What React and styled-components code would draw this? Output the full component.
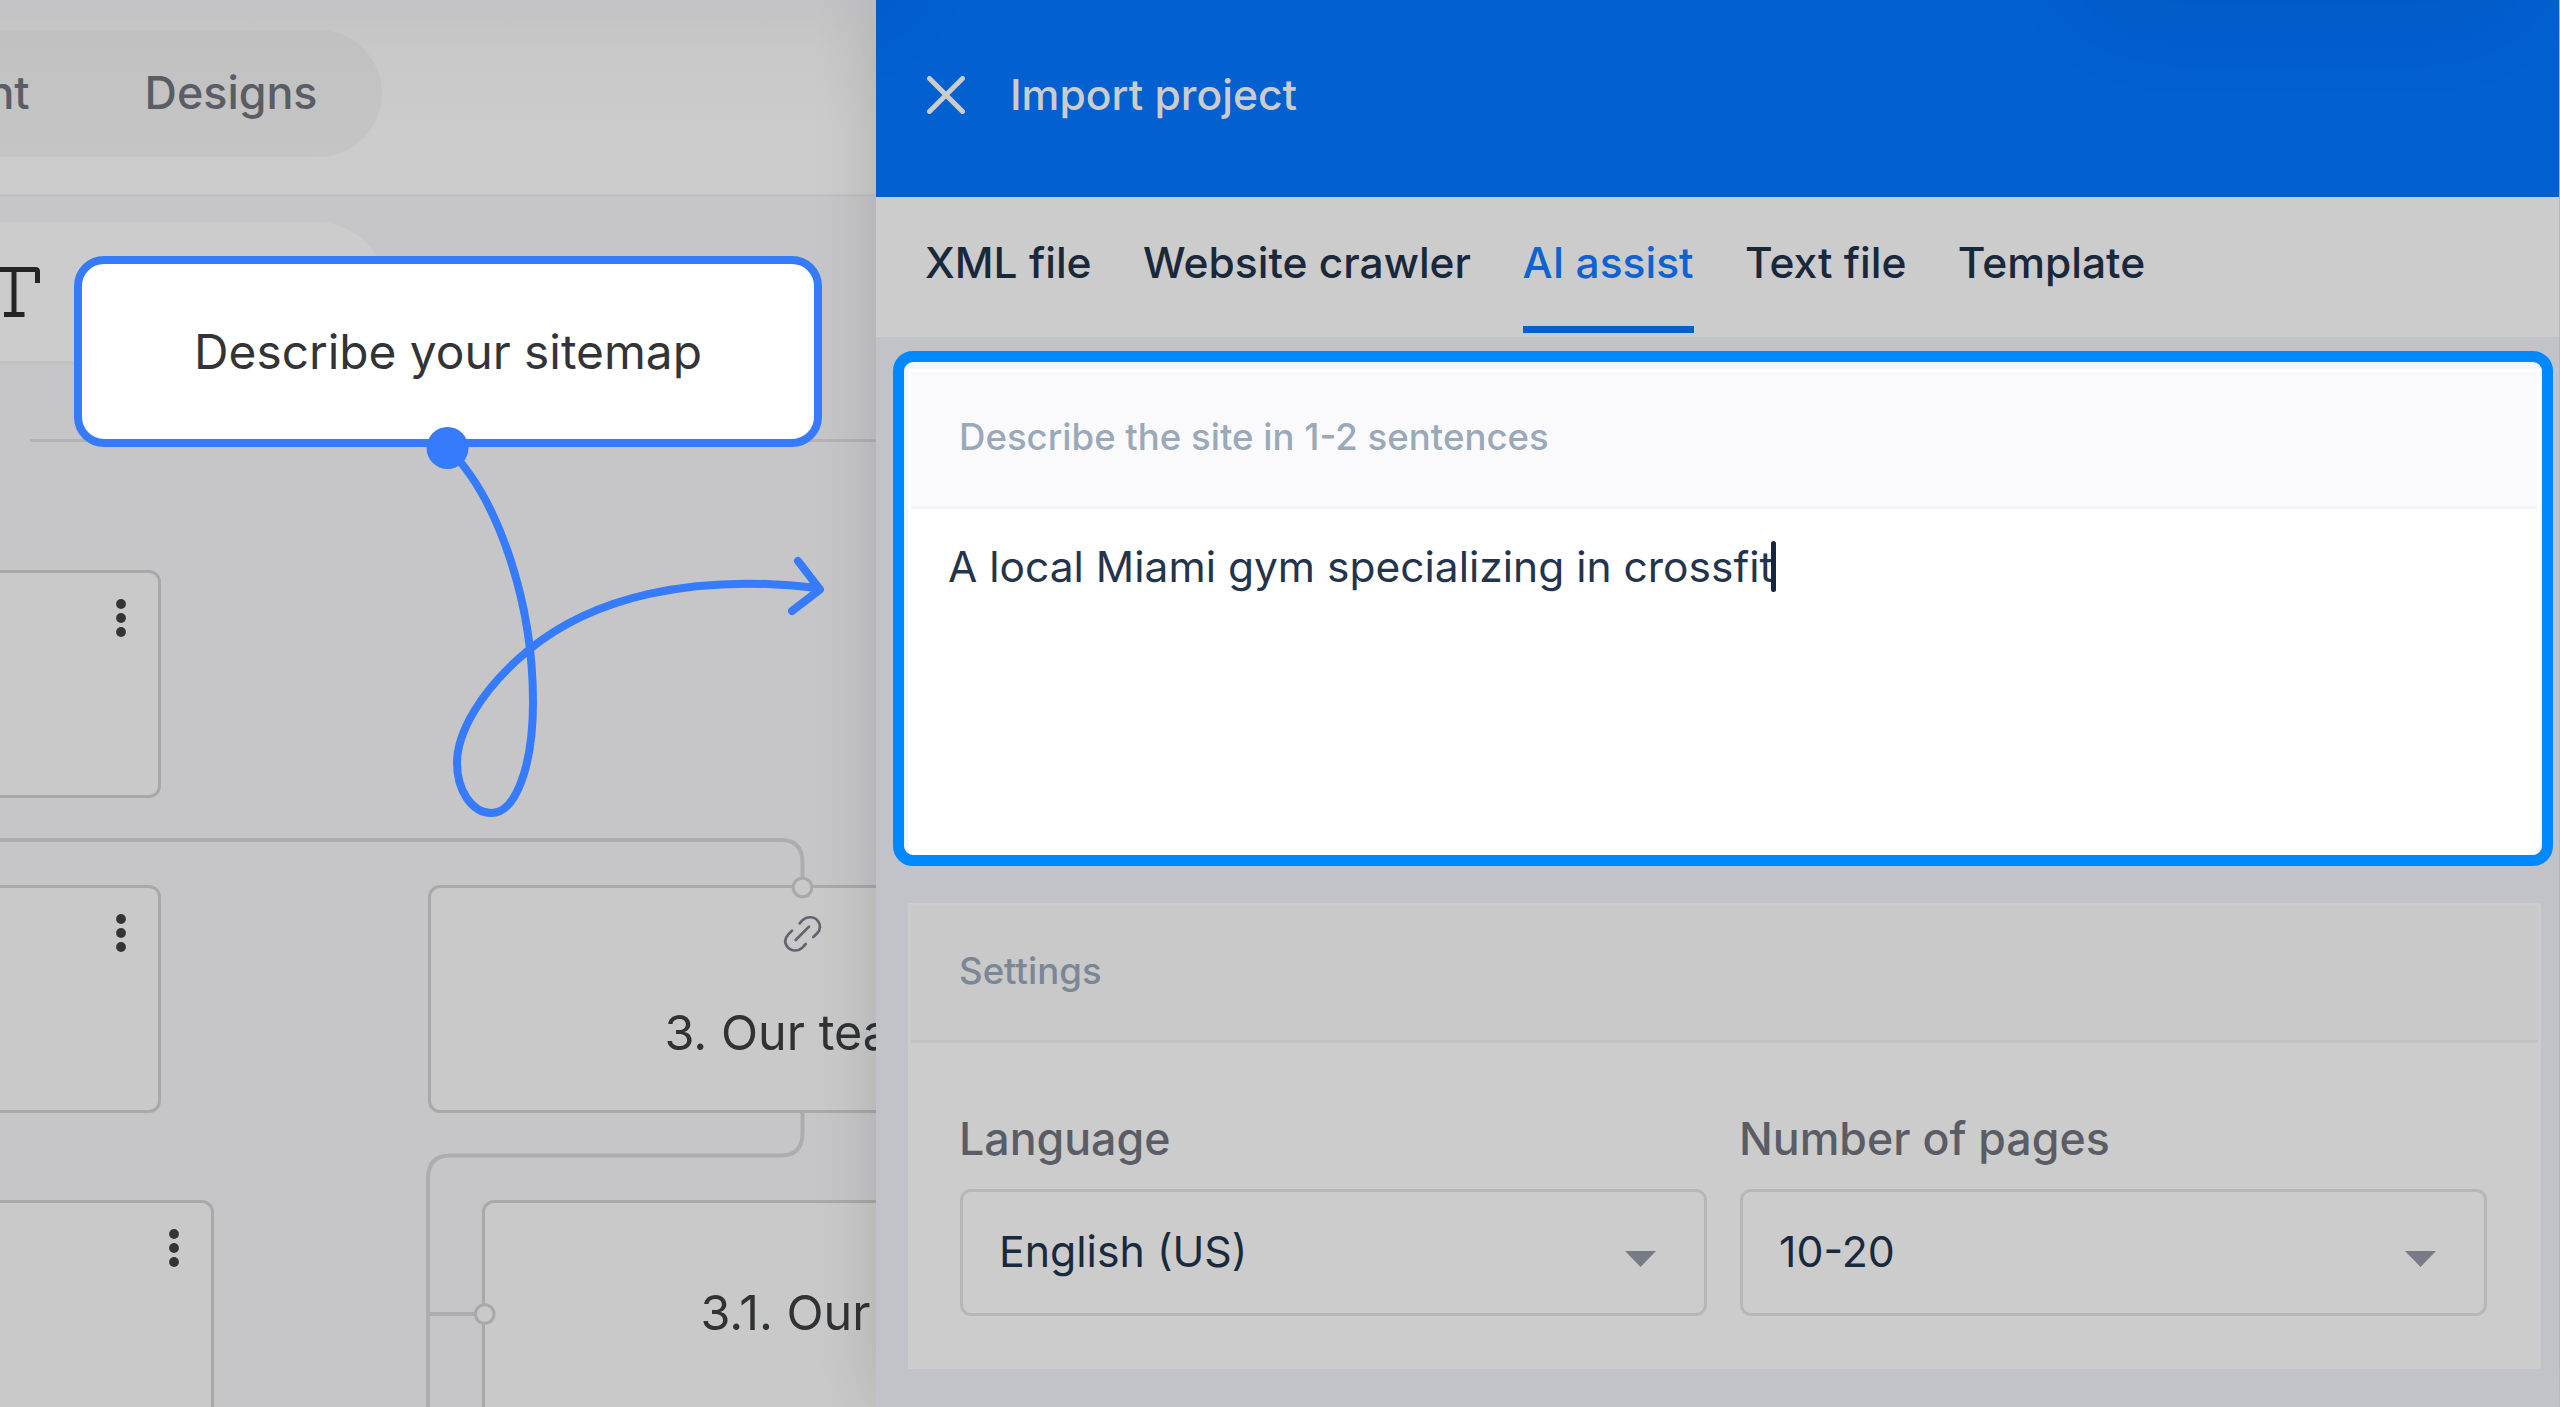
import React, { useState } from 'react'
import styled, { createGlobalStyle } from 'styled-components'

const tabs = ['XML file', 'Website crawler', 'AI assist', 'Text file', 'Template']

const settings = [
    { label: 'Language', value: 'English (US)' },
    { label: 'Number of pages', value: '10-20' },
]

function Dots() {
    return (
        <DotsIcon viewBox="0 0 10 38">
            <circle cx="5" cy="5" r="4.9" />
            <circle cx="5" cy="19" r="4.9" />
            <circle cx="5" cy="33" r="4.9" />
        </DotsIcon>
    )
}

function Sitemap() {
    return (
        <Workspace>
            <TopBar>
                <Switcher>
                    <span>Content</span>
                    <span>Designs</span>
                </Switcher>
            </TopBar>
            <Board>
                <Toolbar>
                    <TextIcon viewBox="-13 0 54 54">
                        <path d="M-10 16V6.5Q-10 4.5 -8 4.5H35.5Q37.5 4.5 37.5 6.5V18M14 4.5V50M4 49.5H24.5" />
                    </TextIcon>
                </Toolbar>
                <Connectors viewBox="0 197 876 1210">
                    <path className="ruler" d="M30 440.5H876" />
                    <path d="M0 840H781Q802.5 840 802.5 863V886" />
                    <path d="M802.5 1112V1133Q802.5 1155.5 781 1155.5H450Q428 1155.5 428 1179V1407M428 1314H480" />
                </Connectors>
                <Node $x={-300} $y={373} $w={460.5} $h={228}><Dots /></Node>
                <Node $x={-300} $y={688} $w={460.5} $h={228}><Dots /></Node>
                <Node $x={-300} $y={1003} $w={514} $h={300}><Dots /></Node>
                <Node $x={427.5} $y={688} $w={750} $h={228}>
                    <LinkIcon viewBox="40 160 116 116">
                        <path d="M90 188L97 180C111 165 136 167 146 183C153 195 152 207 143 217L131 229" />
                        <path d="M67 210L56 221C45 233 44 246 52 257C62 272 84 274 99 260L108 250" />
                        <path d="M118 198L78 238" />
                    </LinkIcon>
                    <NodeTitle $top={49} $left={234}>3. Our team</NodeTitle>
                </Node>
                <Node $x={481.5} $y={1003} $w={750} $h={300}>
                    <NodeTitle $top={79} $left={216}>3.1. Our</NodeTitle>
                </Node>
                <Connectors viewBox="0 197 876 1210">
                    <circle cx="802.5" cy="887.5" r="9.3" />
                    <circle cx="484.7" cy="1314" r="9.3" />
                </Connectors>
            </Board>
        </Workspace>
    )
}

function ImportPanel() {
    const [active, setActive] = useState('AI assist')

    return (
        <Panel>
            <PanelHeader>
                <CloseIcon viewBox="0 0 38 38">
                    <path d="M2.5 2.5L35.5 35.5M35.5 2.5L2.5 35.5" />
                </CloseIcon>
                <h1>Import project</h1>
            </PanelHeader>
            <Tabs>
                {tabs.map(tab => (
                    <Tab key={tab} $active={tab === active} onClick={() => setActive(tab)}>{tab}</Tab>
                ))}
            </Tabs>
            <PanelBody>
                <Highlight>
                    <Prompt>
                        <SectionTitle>Describe the site in 1-2 sentences</SectionTitle>
                        <PromptText>A local Miami gym specializing in crossfit<Caret /></PromptText>
                    </Prompt>
                </Highlight>
                <SettingsCard>
                    <SectionTitle $dim>Settings</SectionTitle>
                    <Fields>
                        {settings.map(({ label, value }) => (
                            <Field key={label}>
                                <Label>{label}</Label>
                                <Select>
                                    {value}
                                    <Arrow viewBox="0 0 31 16"><path d="M0 0H31L15.5 16Z" /></Arrow>
                                </Select>
                            </Field>
                        ))}
                    </Fields>
                </SettingsCard>
            </PanelBody>
        </Panel>
    )
}

function App() {
    return (
        <Page>
            <GlobalStyle />
            <Sitemap />
            <ImportPanel />
            <Callout>Describe your sitemap</Callout>
            <Pointer viewBox="0 0 876 860">
                <circle cx="447.5" cy="448" r="21" />
                <path d="M447.5 448C498 497 533 602 533 702C533 768 515 813 491.5 813C471 813 457 789 457 763C457 735 478 692 528.6 650C592 598 690 573 818 588" />
                <path d="M798 561L820 589.5L792 611" />
            </Pointer>
        </Page>
    )
}

const GlobalStyle = createGlobalStyle`
    * {
        box-sizing: border-box;
    }

    body {
        margin: 0;
        background: #c2c3c9;
        font-family: Inter, sans-serif;
    }
`;

const Page = styled.div`
    position: relative;
    display: flex;
    width: 2560px;
    height: 1407px;
    overflow: hidden;
`;

const Workspace = styled.main`
    display: flex;
    flex-direction: column;
    width: 876px;
    background: #c6c6c8;
    overflow: hidden;
`;

const TopBar = styled.header`
    display: flex;
    align-items: flex-start;
    height: 197px;
    padding-top: 30px;
    border-bottom: 3px solid #c2c2c3;
    background: linear-gradient(#c2c2c4, #c8c8c8 50px, #cccccc 130px);
`;

const Switcher = styled.div`
    display: flex;
    justify-content: flex-end;
    gap: 115px;
    width: 381.5px;
    height: 127px;
    padding-right: 64px;
    border-radius: 0 64px 64px 0;
    background: linear-gradient(#c1c1c2, #c5c5c5);
    color: #5b5d66;
    font-size: 44.8px;
    font-weight: 500;
    line-height: 127px;
`;

const Board = styled.div`
    position: relative;
    flex: 1;
`;

const Toolbar = styled.div`
    width: 387px;
    height: 142px;
    margin-top: 25px;
    padding-top: 43px;
    border-bottom: 3px solid #c2c2c3;
    border-radius: 0 71px 71px 0;
    background: #cccccc;
`;

const TextIcon = styled.svg`
    display: block;
    width: 54px;
    height: 54px;
    margin-left: -13px;
    fill: none;
    stroke: #222426;
    stroke-width: 5;
`;

/* Lines between the nodes of the sitemap */
const Connectors = styled.svg`
    position: absolute;
    top: 0;
    left: 0;
    width: 876px;
    height: 1210px;
    fill: none;
    stroke: #adadae;
    stroke-width: 4;

    .ruler {
        stroke: #b3b3b4;
        stroke-width: 3;
    }

    circle {
        fill: #c9c9c9;
        stroke: #a9a9aa;
        stroke-width: 3;
    }
`;

const Node = styled.article`
    position: absolute;
    left: ${({ $x }) => $x}px;
    top: ${({ $y }) => $y}px;
    width: ${({ $w }) => $w}px;
    height: ${({ $h }) => $h}px;
    border: 3px solid #a9a9aa;
    border-radius: 12px;
    background: #c9c9c9;
`;

const DotsIcon = styled.svg`
    display: block;
    width: 10px;
    height: 38px;
    margin: 26px 32px 0 auto;
    fill: #333436;
`;

const LinkIcon = styled.svg`
    display: block;
    width: 38.7px;
    height: 38.7px;
    margin: 26px auto 0;
    fill: none;
    stroke: #5f646f;
    stroke-width: 8;
    stroke-linecap: round;
`;

const NodeTitle = styled.h3`
    margin: ${({ $top }) => $top}px 0 0 ${({ $left }) => $left}px;
    color: #303234;
    font-size: 48.5px;
    font-weight: 400;
    line-height: 62px;
    white-space: nowrap;
`;

const Panel = styled.aside`
    position: relative;
    flex: 1;
    margin-right: 1px;
    background: #c2c3c9;
    box-shadow: 0 0 60px rgba(0, 0, 0, 0.14);
`;

const PanelHeader = styled.div`
    position: relative;
    display: flex;
    align-items: center;
    gap: 45px;
    height: 197px;
    padding: 0 0 8px 51px;
    background: #0360d0;
    overflow: hidden;

    h1 {
        margin: 0;
        color: #cccccc;
        font-size: 42.6px;
        font-weight: 500;
    }

    /* soft shades falling in from above the window */
    &::before,
    &::after {
        content: '';
        position: absolute;
        top: -100px;
        height: 100px;
        border-radius: 60px;
        box-shadow: 0 0 90px 25px rgba(0, 30, 60, 0.07);
    }

    &::before {
        left: -300px;
        width: 310px;
    }

    &::after {
        left: 1220px;
        width: 410px;
    }
`;

const CloseIcon = styled.svg`
    width: 38px;
    height: 38px;
    fill: none;
    stroke: #cccccc;
    stroke-width: 5;
    stroke-linecap: round;
`;

const Tabs = styled.nav`
    display: flex;
    gap: 51.5px;
    height: 140px;
    padding: 0 49px;
    background: #cccccc;
`;

const Tab = styled.button`
    height: 136px;
    padding: 2px 0 0;
    border: none;
    border-bottom: 7px solid ${({ $active }) => ($active ? '#0360d0' : 'transparent')};
    background: none;
    color: ${({ $active }) => ($active ? '#0f62d2' : '#1a283b')};
    font-family: inherit;
    font-size: 42.5px;
    font-weight: 500;
`;

const PanelBody = styled.div`
    padding: 13.5px 18px 0 32px;
`;

const Highlight = styled.section`
    height: 515px;
    margin: 0 -12px 0 -15px;
    padding: 7px 2px 0 4px;
    border: 11px solid #0088ff;
    border-radius: 20px;
    background: #f4f4ff;
`;

const Prompt = styled.div`
    height: 486px;
    padding: 3px 3px 0;
    border-radius: 0 0 8px 8px;
    background: #ffffff;
`;

const SectionTitle = styled.h2`
    margin: 0;
    padding: 1px 48px 4px;
    border-bottom: 3px solid ${({ $dim }) => ($dim ? '#c2c2c2' : '#f4f4f6')};
    background: ${({ $dim }) => ($dim ? '#c9c9c9' : '#fafafc')};
    color: ${({ $dim }) => ($dim ? '#7b8795' : '#9aa9ba')};
    font-size: 36.6px;
    font-weight: 500;
    line-height: 129px;
`;

const PromptText = styled.p`
    display: flex;
    align-items: center;
    margin: 0;
    padding: 28px 37px;
    color: #24344a;
    font-size: 42.5px;
    line-height: 60px;
`;

const Caret = styled.span`
    width: 5px;
    height: 51px;
    margin-left: -2px;
    border-radius: 3px;
    background: #16263c;
`;

const SettingsCard = styled.section`
    height: 466px;
    margin-top: 37px;
    padding: 3px;
    background: #cccccc;
`;

const Fields = styled.div`
    display: flex;
    gap: 33px;
    padding: 66px 49px 0;
`;

const Field = styled.div`
    width: 747px;
`;

const Label = styled.div`
    color: #5b5d66;
    font-size: 44.7px;
    font-weight: 500;
    line-height: 60px;
    margin: 0 0 20px -1px;
`;

const Select = styled.div`
    display: flex;
    align-items: center;
    justify-content: space-between;
    height: 127px;
    padding: 0 48px 1px 36px;
    border: 3px solid #b7b7ba;
    border-radius: 11px;
    color: #1a2a3d;
    font-size: 42.8px;
`;

const Arrow = styled.svg`
    width: 31px;
    height: 16px;
    margin-top: 14px;
    fill: #767b85;
`;

/* The tour step that sits over the page */
const Callout = styled.div`
    position: absolute;
    top: 256px;
    left: 73.5px;
    display: flex;
    align-items: center;
    justify-content: center;
    width: 748px;
    height: 191px;
    padding: 1px 0 0 1px;
    border: 8px solid #357bfb;
    border-radius: 30px;
    background: #ffffff;
    color: #333436;
    font-size: 47.8px;
`;

const Pointer = styled.svg`
    position: absolute;
    top: 0;
    left: 0;
    width: 876px;
    height: 860px;
    fill: none;
    stroke: #357bfb;
    stroke-width: 8;
    stroke-linecap: round;
    stroke-linejoin: round;

    circle {
        fill: #357bfb;
        stroke: none;
    }
`;

export default App;
